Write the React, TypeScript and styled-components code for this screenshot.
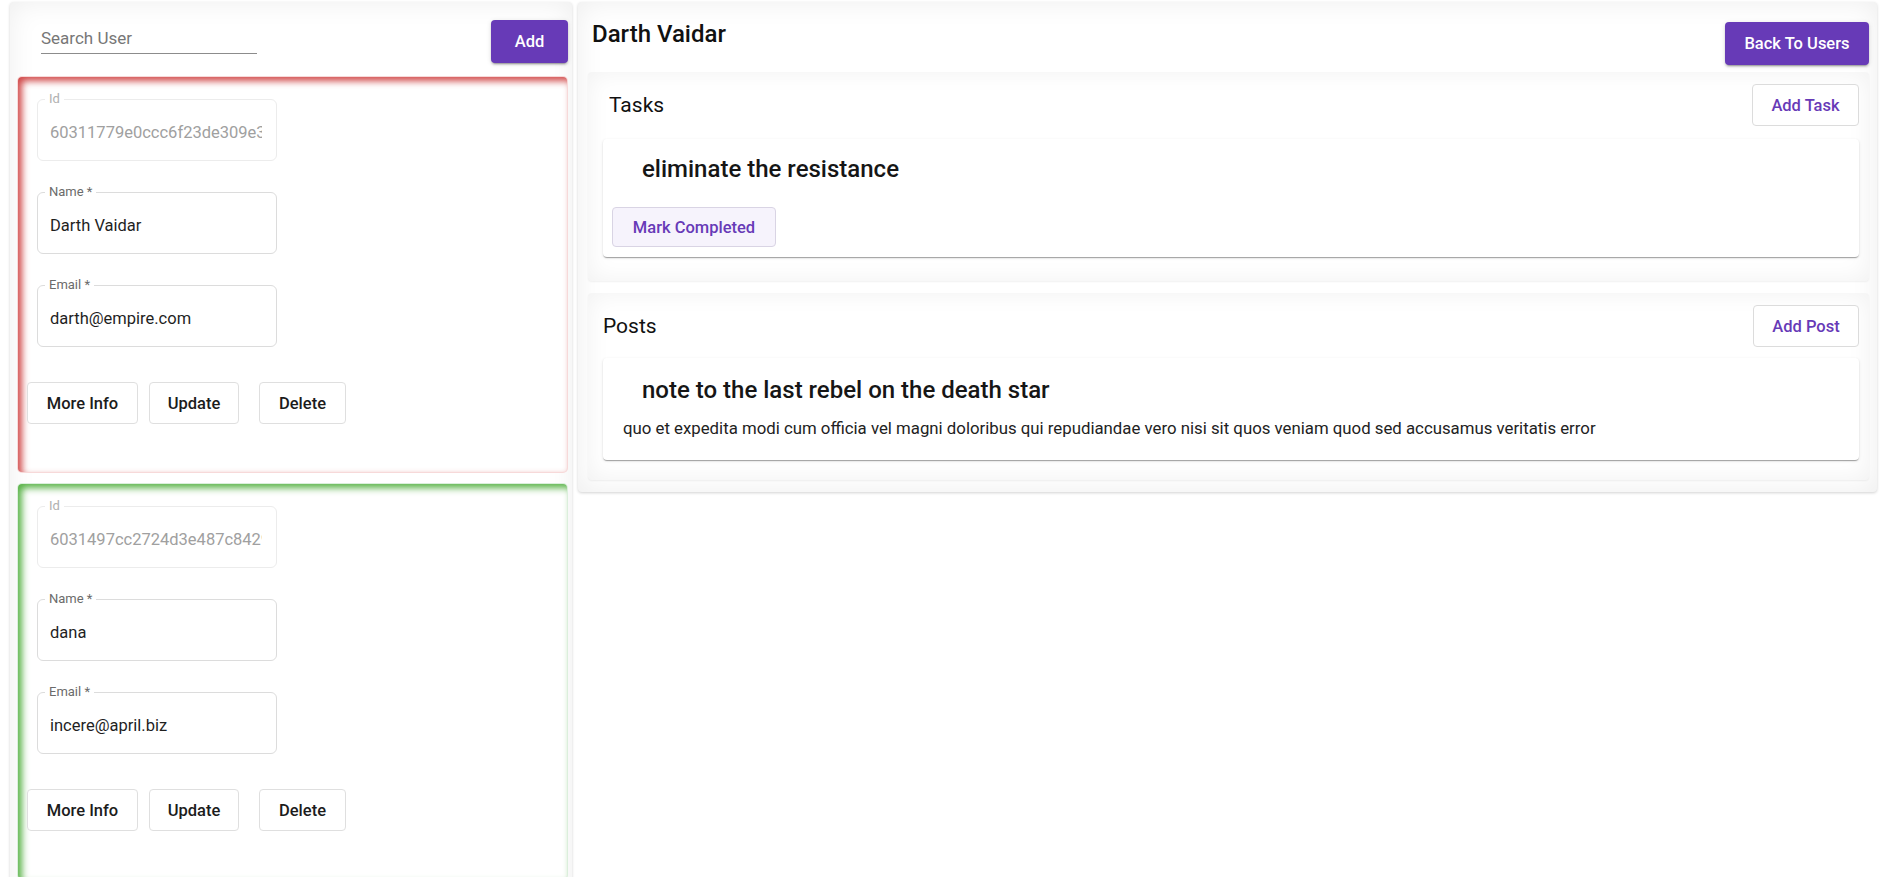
import React from "react";
import styled, { createGlobalStyle, css } from "styled-components";

const GlobalStyle = createGlobalStyle`
  html, body {
    margin: 0;
    padding: 0;
    background: #ffffff;
    overflow: hidden;
    font-family: Roboto, "Liberation Sans", Arial, sans-serif;
    color: #1f1f1f;
  }
  * { box-sizing: border-box; }
`;

const PURPLE = "#673ab7";

const Page = styled.div`
  display: flex;
  align-items: flex-start;
  gap: 6px;
  padding: 2px 6px 0 10px;
`;

const Panel = styled.div`
  background: #ffffff;
  border-radius: 4px;
  box-shadow: inset 0 0 28px rgba(0, 0, 0, 0.07), 0 1px 3px rgba(0, 0, 0, 0.18);
`;

const LeftPanel = styled(Panel)`
  flex: none;
  width: 562px;
  padding: 0 4px 12px 7px;
`;

const TopBar = styled.div`
  display: flex;
  justify-content: space-between;
  align-items: flex-start;
  padding: 18px 0 13px 24px;
`;

const SearchInput = styled.input`
  margin-top: 7px;
  width: 216px;
  height: 27px;
  border: none;
  border-bottom: 1px solid #8c8c8c;
  background: transparent;
  outline: none;
  padding: 0 0 4px 0;
  font-family: Roboto, "Liberation Sans", Arial, sans-serif;
  font-size: 17px;
  color: #222;
  &::placeholder {
    color: #777;
  }
`;

const PrimaryButton = styled.button<{ $w: number }>`
  width: ${(p) => p.$w}px;
  height: 43px;
  border: none;
  border-radius: 4px;
  background: ${PURPLE};
  color: #ffffff;
  font-family: Roboto, "Liberation Sans", Arial, sans-serif;
  font-size: 16.5px;
  font-weight: 500;
  box-shadow: 0 3px 1px -2px rgba(0, 0, 0, 0.2), 0 2px 2px rgba(0, 0, 0, 0.14),
    0 1px 5px rgba(0, 0, 0, 0.12);
  cursor: pointer;
  flex: none;
`;

const UserCard = styled.div<{ $tone: "red" | "green" }>`
  margin-bottom: 10px;
  padding: 22px 0 48px 9px;
  border-radius: 5px;
  background: #ffffff;
  ${(p) =>
    p.$tone === "red"
      ? css`
          border: 1px solid rgba(211, 47, 47, 0.18);
          box-shadow: inset 4px 4px 7px rgba(200, 40, 40, 0.85);
        `
      : css`
          border: 1px solid rgba(76, 175, 80, 0.2);
          box-shadow: inset 4px 4px 7px rgba(70, 170, 50, 0.9);
        `}
`;

const FieldList = styled.div`
  display: flex;
  flex-direction: column;
  gap: 31px;
  margin-left: 10px;
  width: 240px;
`;

const Field = styled.div`
  position: relative;
  height: 62px;
`;

const FieldBox = styled.input<{ $disabled?: boolean }>`
  width: 100%;
  height: 100%;
  border: 1px solid ${(p) => (p.$disabled ? "#ececec" : "#dcdcdc")};
  border-radius: 6px;
  padding: 5px 14px 0 12px;
  background: #ffffff;
  outline: none;
  font-family: Roboto, "Liberation Sans", Arial, sans-serif;
  font-size: 16.5px;
  color: ${(p) => (p.$disabled ? "#a0a0a0" : "#1f1f1f")};
`;

const FieldLabel = styled.span<{ $disabled?: boolean }>`
  position: absolute;
  left: 8px;
  top: -8px;
  padding: 0 4px;
  background: #ffffff;
  font-size: 13px;
  line-height: 16px;
  color: ${(p) => (p.$disabled ? "#b0b0b0" : "#6b6b6b")};
`;

const ButtonRow = styled.div`
  display: flex;
  gap: 11px;
  margin-top: 35px;
`;

const OutlineButton = styled.button<{ $w: number; $gapLeft?: number }>`
  width: ${(p) => p.$w}px;
  height: 42px;
  margin-left: ${(p) => p.$gapLeft ?? 0}px;
  border: 1px solid #dfdfdf;
  border-radius: 4px;
  background: #ffffff;
  color: #1c1c1c;
  font-family: Roboto, "Liberation Sans", Arial, sans-serif;
  font-size: 16.5px;
  font-weight: 500;
  cursor: pointer;
`;

const RightPanel = styled(Panel)`
  flex: none;
  width: 1299px;
  padding: 0 8px 12px 10px;
`;

const DetailHeader = styled.div`
  display: flex;
  justify-content: space-between;
  align-items: flex-start;
  padding: 20px 0 7px 4px;
`;

const Title = styled.h2`
  margin: -2px 0 0 0;
  font-size: 24px;
  line-height: 28px;
  font-weight: 500;
  color: #111;
`;

const Section = styled.div<{ $padLeft: number; $padBottom: number; $mt: number }>`
  margin-top: ${(p) => p.$mt}px;
  padding: 12px 10px ${(p) => p.$padBottom}px ${(p) => p.$padLeft}px;
  background: #ffffff;
  border-radius: 4px;
  box-shadow: inset 0 0 24px rgba(0, 0, 0, 0.06), 0 1px 2px rgba(0, 0, 0, 0.06);
`;

const SectionHeader = styled.div<{ $indent: number }>`
  display: flex;
  justify-content: space-between;
  align-items: center;
  padding-left: ${(p) => p.$indent}px;
`;

const SectionTitle = styled.span`
  font-size: 21px;
  font-weight: 400;
  color: #111;
`;

const SecondaryButton = styled.button<{ $w: number }>`
  width: ${(p) => p.$w}px;
  height: 42px;
  border: 1px solid #dcdcdc;
  border-radius: 4px;
  background: #ffffff;
  color: ${PURPLE};
  font-family: Roboto, "Liberation Sans", Arial, sans-serif;
  font-size: 16.5px;
  font-weight: 500;
  cursor: pointer;
`;

const ItemCard = styled.div<{ $mt: number; $pb: number }>`
  display: flow-root;
  margin-top: ${(p) => p.$mt}px;
  padding: 0 0 ${(p) => p.$pb}px 0;
  background: #ffffff;
  border-radius: 4px;
  box-shadow: 0 2px 1px -1px rgba(0, 0, 0, 0.2), 0 1px 1px rgba(0, 0, 0, 0.14),
    0 1px 3px rgba(0, 0, 0, 0.12);
`;

const ItemTitle = styled.h3<{ $mt: number }>`
  margin: ${(p) => p.$mt}px 0 0 39px;
  font-size: 24px;
  line-height: 28px;
  font-weight: 500;
  color: #161616;
`;

const ItemBody = styled.p`
  margin: 14px 0 0 20px;
  font-size: 16.8px;
  line-height: 20px;
  color: #222;
`;

const CompleteButton = styled.button`
  display: block;
  margin: 24px 0 0 9px;
  width: 164px;
  height: 40px;
  border: 1px solid #d9d4e4;
  border-radius: 4px;
  background: #f6f3fc;
  color: ${PURPLE};
  font-family: Roboto, "Liberation Sans", Arial, sans-serif;
  font-size: 16.5px;
  font-weight: 500;
  cursor: pointer;
`;

type User = { id: string; name: string; email: string; tone: "red" | "green" };

const users: User[] = [
  { id: "60311779e0ccc6f23de309e3a1", name: "Darth Vaidar", email: "darth@empire.com", tone: "red" },
  { id: "6031497cc2724d3e487c8429b2", name: "dana", email: "incere@april.biz", tone: "green" },
];

function TextField({ label, value, disabled }: { label: string; value: string; disabled?: boolean }) {
  return (
    <Field>
      <FieldBox $disabled={disabled} value={value} readOnly />
      <FieldLabel $disabled={disabled}>{label}</FieldLabel>
    </Field>
  );
}

function UserItem({ user }: { user: User }) {
  return (
    <UserCard $tone={user.tone}>
      <FieldList>
        <TextField label="Id" value={user.id} disabled />
        <TextField label="Name *" value={user.name} />
        <TextField label="Email *" value={user.email} />
      </FieldList>
      <ButtonRow>
        <OutlineButton $w={111}>More Info</OutlineButton>
        <OutlineButton $w={90}>Update</OutlineButton>
        <OutlineButton $w={87} $gapLeft={9}>
          Delete
        </OutlineButton>
      </ButtonRow>
    </UserCard>
  );
}

export default function App() {
  return (
    <>
      <GlobalStyle />
      <Page>
        <LeftPanel>
          <TopBar>
            <SearchInput placeholder="Search User" />
            <PrimaryButton $w={77}>Add</PrimaryButton>
          </TopBar>
          {users.map((u) => (
            <UserItem key={u.id} user={u} />
          ))}
        </LeftPanel>
        <RightPanel>
          <DetailHeader>
            <Title>Darth Vaidar</Title>
            <PrimaryButton $w={144}>Back To Users</PrimaryButton>
          </DetailHeader>
          <Section $padLeft={15} $padBottom={24} $mt={0}>
            <SectionHeader $indent={6}>
              <SectionTitle>Tasks</SectionTitle>
              <SecondaryButton $w={107}>Add Task</SecondaryButton>
            </SectionHeader>
            <ItemCard $mt={13} $pb={10}>
              <ItemTitle $mt={16}>eliminate the resistance</ItemTitle>
              <CompleteButton>Mark Completed</CompleteButton>
            </ItemCard>
          </Section>
          <Section $padLeft={15} $padBottom={20} $mt={12}>
            <SectionHeader $indent={0}>
              <SectionTitle>Posts</SectionTitle>
              <SecondaryButton $w={106}>Add Post</SecondaryButton>
            </SectionHeader>
            <ItemCard $mt={11} $pb={22}>
              <ItemTitle $mt={18}>note to the last rebel on the death star</ItemTitle>
              <ItemBody>
                quo et expedita modi cum officia vel magni doloribus qui repudiandae vero nisi sit quos veniam
                quod sed accusamus veritatis error
              </ItemBody>
            </ItemCard>
          </Section>
        </RightPanel>
      </Page>
    </>
  );
}
